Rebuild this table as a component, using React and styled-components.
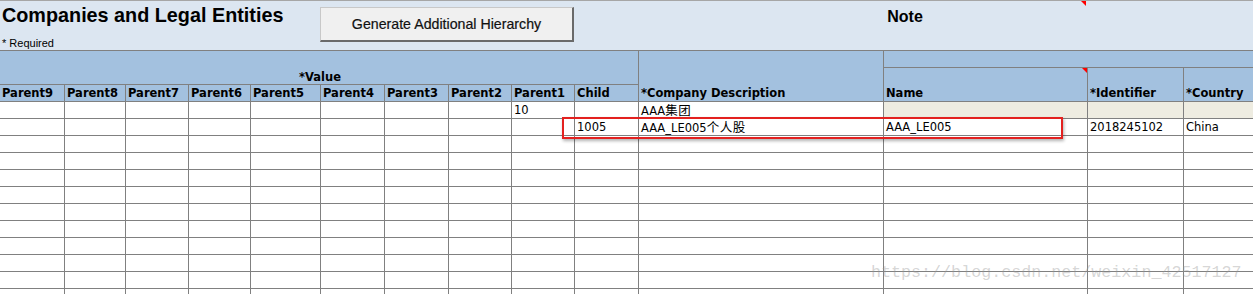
import React from "react";
import styled, { createGlobalStyle } from "styled-components";

const GlobalStyle = createGlobalStyle`
  html, body { margin: 0; padding: 0; background: #ffffff; overflow: hidden; }
  * { box-sizing: border-box; }
`;

const GRID_LINE = "#808080";
const COLS = "65px 61px 63px 62px 70px 64px 64px 63px 63px 64px 245px 204px 96px 1fr";

const Page = styled.div`
  position: relative;
  width: 1253px;
  height: 294px;
  overflow: hidden;
  background: #ffffff;
  font-family: "DejaVu Sans", "Noto Sans CJK SC", sans-serif;
`;

const TitleBand = styled.div`
  position: relative;
  display: flex;
  height: 51px;
  background: #dce6f1;
  border-top: 1px solid #a6a6a6;
  border-bottom: 1px solid ${GRID_LINE};
`;

const TitleBlock = styled.div`
  width: 320px;
  padding: 3px 0 0 2px;
  display: flex;
  flex-direction: column;
`;

const Title = styled.div`
  font-family: "Liberation Sans", Arial, sans-serif;
  font-weight: bold;
  font-size: 19.8px;
  line-height: 22px;
  color: #000;
  white-space: nowrap;
`;

const Required = styled.div`
  margin-top: 11px;
  font-family: "Liberation Sans", Arial, sans-serif;
  font-size: 11px;
  line-height: 13px;
  color: #000;
`;

const ActionButton = styled.button`
  margin-top: 6px;
  width: 254px;
  height: 35px;
  padding: 0;
  background: #f0f0f0;
  border-top: 1px solid #c8c8c8;
  border-left: 1px solid #c8c8c8;
  border-right: 2px solid #6a6a6a;
  border-bottom: 2px solid #6a6a6a;
  font-family: "Liberation Sans", Arial, sans-serif;
  font-size: 14.2px;
  color: #111;
  -webkit-text-stroke: 0.2px #111;
  cursor: pointer;
`;

const NoteCell = styled.div`
  margin-left: 64px;
  width: 534px;
  padding-top: 7px;
  text-align: center;
  font-family: "Liberation Sans", Arial, sans-serif;
  font-weight: bold;
  font-size: 16px;
  line-height: 18px;
  color: #000;
`;

const CommentMark = styled.span`
  position: absolute;
  top: ${(p) => p.$top}px;
  ${(p) => (p.$left != null ? `left: ${p.$left}px;` : "right: 0;")}
  width: 0;
  height: 0;
  border-top: 5px solid #ff0000;
  border-left: 5px solid transparent;
`;

const HeaderGrid = styled.div`
  display: grid;
  grid-template-columns: ${COLS};
  grid-template-rows: 17px 17px 17px;
  background: #a3c1df;
`;

const HeadCell = styled.div`
  position: relative;
  grid-column: ${(p) => p.$col};
  grid-row: ${(p) => p.$row};
  display: flex;
  align-items: flex-end;
  justify-content: ${(p) => (p.$center ? "center" : "flex-start")};
  padding: 0 0 0 2px;
  border-bottom: 1px solid ${GRID_LINE};
  border-right: ${(p) => (p.$noRight ? "none" : `1px solid ${GRID_LINE}`)};
  font-weight: bold;
  font-size: 11.5px;
  line-height: ${(p) => (p.$center ? 14 : 15)}px;
  color: #000;
  white-space: nowrap;
`;

const BodyGrid = styled.div`
  display: grid;
  grid-template-columns: ${COLS};
  grid-auto-rows: 17px;
`;

const Cell = styled.div`
  padding-left: 2px;
  border-bottom: 1px solid ${GRID_LINE};
  border-right: ${(p) => (p.$noRight ? "none" : `1px solid ${GRID_LINE}`)};
  background: ${(p) => (p.$tint ? "#eeece1" : "#ffffff")};
  font-size: 11.5px;
  line-height: 16px;
  color: #000;
  white-space: nowrap;
`;

const Cjk = styled.span`
  font-family: "Noto Sans CJK SC", sans-serif;
  font-size: 12.5px;
  line-height: 16px;
  letter-spacing: 0.5px;
`;

const Highlight = styled.div`
  position: absolute;
  left: 562px;
  top: 117px;
  width: 501px;
  height: 22px;
  border: 2px solid #e3211f;
  box-shadow: 1px 2px 3px rgba(0, 0, 0, 0.3);
  pointer-events: none;
`;

const Watermark = styled.div`
  position: absolute;
  left: 871px;
  top: 263px;
  font-family: "Liberation Mono", "Courier New", monospace;
  font-size: 16.7px;
  line-height: 20px;
  color: rgba(150, 150, 150, 0.4);
  white-space: nowrap;
  pointer-events: none;
`;

const parents = ["Parent9", "Parent8", "Parent7", "Parent6", "Parent5", "Parent4", "Parent3", "Parent2", "Parent1", "Child"];

const rows = [
  { 8: "10", 10: "AAA集团", tint: true },
  { 9: "1005", 10: "AAA_LE005个人股", 11: "AAA_LE005", 12: "2018245102", 13: "China" },
];
const ROW_COUNT = 12;

function CellText({ text }) {
  if (!text) return null;
  const parts = text.split(/([\u4e00-\u9fff]+)/).filter(Boolean);
  return parts.map((part, i) =>
    /[\u4e00-\u9fff]/.test(part) ? <Cjk key={i}>{part}</Cjk> : <React.Fragment key={i}>{part}</React.Fragment>
  );
}

export default function App() {
  return (
    <>
      <GlobalStyle />
      <Page>
        <TitleBand>
          <TitleBlock>
            <Title>Companies and Legal Entities</Title>
            <Required>* Required</Required>
          </TitleBlock>
          <ActionButton>Generate Additional Hierarchy</ActionButton>
          <NoteCell>Note</NoteCell>
          <CommentMark $top={0} $left={1081} />
        </TitleBand>

        <HeaderGrid>
          <HeadCell $col="1 / 11" $row="1 / 3" $center>*Value</HeadCell>
          {parents.map((p, i) => (
            <HeadCell key={p} $col={`${i + 1}`} $row="3">{p}</HeadCell>
          ))}
          <HeadCell $col="11" $row="1 / 4">*Company Description</HeadCell>
          <HeadCell $col="12 / 15" $row="1" $noRight />
          <HeadCell $col="12" $row="2 / 4">
            Name
            <CommentMark $top={0} />
          </HeadCell>
          <HeadCell $col="13" $row="2 / 4">*Identifier</HeadCell>
          <HeadCell $col="14" $row="2 / 4" $noRight>*Country</HeadCell>
        </HeaderGrid>

        <BodyGrid>
          {Array.from({ length: ROW_COUNT }).map((_, r) => {
            const data = rows[r] || {};
            return Array.from({ length: 14 }).map((__, c) => (
              <Cell key={`${r}-${c}`} $noRight={c === 13} $tint={data.tint && c >= 11}>
                <CellText text={data[c]} />
              </Cell>
            ));
          })}
        </BodyGrid>

        <Highlight />
        <Watermark>https://blog.csdn.net/weixin_42517127</Watermark>
      </Page>
    </>
  );
}
